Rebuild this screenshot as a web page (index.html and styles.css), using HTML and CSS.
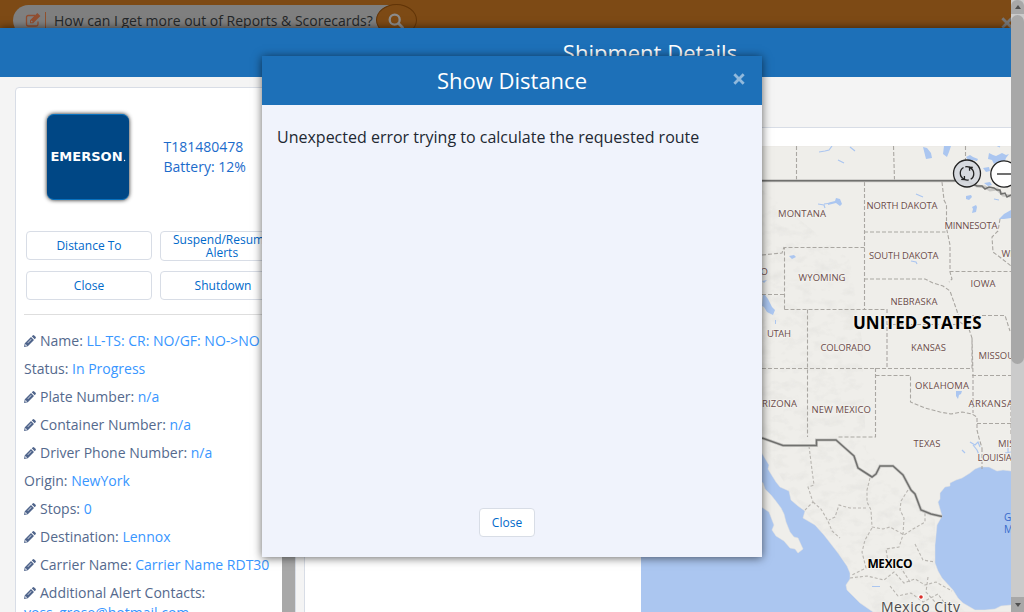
FILE: index.html
```html
<!DOCTYPE html>
<html lang="en">
<head>
<meta charset="utf-8">
<title>Shipment Details</title>
<link rel="stylesheet" href="styles.css">
</head>
<body>
<svg class="defs" width="0" height="0" aria-hidden="true">
  <symbol id="pencil" viewBox="0 0 12 12"><path fill="currentColor" fill-rule="evenodd" d="M0 12 .8 8.200 7 2 10 5 3.800 11.200ZM1.500 9 1.200 10.300 1.800 10.900 3 10.500ZM3.500 7.700 3.900 8.100 7.500 4.500 7.100 4.100ZM7.700 1.300 8.700.4Q9.500-.3 10.200.4L11.600 1.800Q12.300 2.600 11.600 3.300L10.700 4.300Z"/></symbol>
</svg>
<div class="window">
  <div class="page">
    <header class="topbar">
      <div class="search">
        <svg class="compose" viewBox="0 0 16 16"><path d="M13 9.500v2.700q0 1.800-1.800 1.800H3.300q-1.800 0-1.800-1.800V5.300q0-1.800 1.800-1.800H10" fill="none" stroke="currentColor" stroke-width="1.300"/><path d="M5 11.300V8.200L12.300 1l3.100 3.100L8.100 11.300ZM6 9v1.300h1.300l.5-.5L6.500 8.500Z" fill="currentColor" fill-rule="evenodd"/></svg>
        <span class="divider"></span>
        <span class="query">How can I get more out of Reports &amp; Scorecards?</span>
      </div>
      <div class="search-btn"><svg viewBox="0 0 16 16"><circle cx="6.700" cy="6.700" r="5" fill="none" stroke="currentColor" stroke-width="2.300"/><path d="m10.500 10.500 4 4" stroke="currentColor" stroke-width="2.800" stroke-linecap="round"/></svg></div>
      <svg class="cross dim" viewBox="0 0 12 12"><path d="m2 2 8 8M10 2l-8 8"/></svg>
    </header>
    <main class="sheet">
      <h1 class="sheet-title">Shipment Details</h1>
      <div class="content">
        <section class="panel">
          <div class="details">
            <div class="summary">
              <div class="logo"><svg viewBox="0 0 83 85"><text x="3.500" y="46.500" textLength="73" lengthAdjust="spacingAndGlyphs">EMERSON</text><circle cx="78.500" cy="46" r=".7"/></svg></div>
              <div class="unit"><div>T181480478</div><div>Battery: 12%</div></div>
            </div>
            <div class="actions">
              <button class="btn">Distance To</button><button class="btn two-line">Suspend/Resume Alerts</button>
              <button class="btn">Close</button><button class="btn">Shutdown</button>
            </div>
            <div class="fields">
              <p><svg class="pen"><use href="#pencil"/></svg>Name: <b>LL-TS: CR: NO/GF: NO-&gt;NO</b></p>
              <p>Status: <b>In Progress</b></p>
              <p><svg class="pen"><use href="#pencil"/></svg>Plate Number: <b>n/a</b></p>
              <p><svg class="pen"><use href="#pencil"/></svg>Container Number: <b>n/a</b></p>
              <p><svg class="pen"><use href="#pencil"/></svg>Driver Phone Number: <b>n/a</b></p>
              <p>Origin: <b>NewYork</b></p>
              <p><svg class="pen"><use href="#pencil"/></svg>Stops: <b>0</b></p>
              <p><svg class="pen"><use href="#pencil"/></svg>Destination: <b>Lennox</b></p>
              <p><svg class="pen"><use href="#pencil"/></svg>Carrier Name: <b>Carrier Name RDT30</b></p>
              <p class="last"><svg class="pen"><use href="#pencil"/></svg>Additional Alert Contacts:<br><b>voss_grose@hotmail.com</b></p>
            </div>
          </div>
          <div class="panel-scroll"></div>
        </section>
        <section class="map-panel">
          <svg class="map" viewBox="641 146 370 466">
            <defs><filter id="relief" x="0" y="0" width="100%" height="100%"><feTurbulence type="fractalNoise" baseFrequency=".07 .11" numOctaves="3" seed="8"/><feColorMatrix values="0 0 0 0 .5  0 0 0 0 .5  0 0 0 0 .48  1.6 0 0 0 -.75"/></filter>
            <clipPath id="mountains"><path d="M762 190 800 220 850 260 862 340 866 450 935 520 935 570 965 612H875L848 566 789 491 762 445Z"/></clipPath></defs>
            <rect class="water" x="641" y="146" width="370" height="466"/>
            <path class="land" d="M700 146H1011V471L1003 470 997 471 989 467 980 467 975 469 970 473 962 478 956 480 950 483 950 486 945 487 940 493 940 499 938 502 942 516 937 525 935 545 935 563 938 571 942 578 953 590 958 598 963 603 975 610 985 610 995 609 1001 606 1011 605V612H873L860 603 853 596 847 590 846 585 850 579 850 573 847 566 838 553 824 535 815 525 803 518 805 511 798 506 791 500 789 491 780 487 776 482 771 474 768 469 769 465 763 455 755 440H700Z"/>
            <path class="land" d="M755 477 763 483 765 489 771 495 775 500 781 508 784 514 786 522 790 532 794 537 798 538 803 549 798 553 795 549 790 548 784 541 776 536 772 530 774 525 769 512 760 506Z"/>
            <g clip-path="url(#mountains)"><rect x="762" y="190" width="210" height="422" filter="url(#relief)" opacity=".22"/></g>
            <g class="lakes">
              <path d="M923 147l4 1 4 5 1 5-6 1ZM944 146h7l-2 6-2 5-4-3ZM989 153l4 2 3 1 6-3 4 2 3-1-3 4-1 3-6 0-5 3-2-4-4-1ZM983 168l6-1 1 4-4 1ZM966 157l4-2 3 2 5 2-1 2-4-1-3 1-2-1ZM984 183l6-1 2 3-4 1ZM966 196l5-1 1 2-3 3-3-1ZM972 207l4-2 1 2-1 5-4 1 1-4ZM999 219l5-5 7-4v8l-7 1ZM831 202l4-1 1-3 4 1 2 5-2 2-4-3-8 2 0-2ZM789 256l5-1 2 2-4 2ZM763 295l2 0 3 4 4 8 3 3-2 5-6-3-3-5-2-1ZM956 391l6 0-1 3-2 1-1 4-2-3ZM872 586l8 0 0 1-8 0ZM762 281l5-1-3 3ZM775 320l1 0 0 4-1 0Z"/>
            </g>
            <path class="streams" d="m819 152 6-1 4-1 3-4M838 160l6 3M850 147l5 4M818 204l6 1 1 3M824 204l8-1M916 194l7 3M911 261l5 1 1 2M994 199l5 1M996 145l4 2M970 442l5 3 3-3 2 5M962 450l3 3M973 445l4 5 2 5M1008 447v5M1005 453l6-1"/>
            <g class="state-lines">
              <path d="M796.500 146V180M893.500 146 894.500 180M965.500 146V160M864.500 182V309M864 232H945.500M942 182 944 200 946.500 205V228L950 245V272L952 279 949 282M864 279H925L933 283 943 286 950 291 957 311 959 318M949.500 271.500H1011M784.500 309.500V247.500H864.500M762 255 782 253 784 247M762 294.500H784.500M784.500 309.500H887V368.500M807.500 309.500V437M762 368.500H972V338L969 329 960 322M887 324.500H960M952 315.500H1005L1010 331M875.500 368V437H837M875.500 375.500H910.500V402L925 408 940 412 951 414 962 412 972 414 977 417V430L979 438 982 448M972 338 973 375 973 413M972 375.500H1011M977 423.500H1011M1011 400V435M1000 219 998 231 992 237 993 252 1001 258 1011 266M982 448V469"/>
            </g>
            <path class="state-lines mexican" d="M809 446 812 470 814 485 808 487 813 502 805 510M813 502 821 509 828 521 832 531 840 538M870 478 867 490 867 502 871 510 872 527M866 508H850L839 505 835 517 829 520M872 527 883 529 890 527 899 532 904 535 913 529 925 522 925 513M908 490 901 501 900 510 904 518 903 535 899 547 886 549 888 562 901 568 910 582M915 544 923 560 935 562M872 528 865 540 862 552 866 568 852 575M850 578 867 576 884 580 894 572 904 583 915 579 925 585 936 582 952 591M890 586 898 596 911 593 923 602 938 594 948 608M928 577 926 592 936 603"/>
            <path class="border-glow" d="M762 180.700H966L977 186 985 187 990 190 997 189 1003 195 1011 196M762 438 783 445.500H816.500V440H836L845 448 854 456 858 468 872 477 876 474 880 466H893L903 475 911 490 915 494 921 510 931 514 942 516.500"/>
            <path class="border" d="M762 180.700H966L977 186 982 186 985 189 989 187 994 188 997 190 1000 190 1001 194 1005 193 1007 197 1011 195M762 438 783 445.500H816.500V440H836L845 448 854 456 858 468 872 477 876 474 880 466H893L903 475 911 490 915 494 921 510 931 514 942 516.500"/>
            <g class="states">
              <text x="778" y="217" textLength="48">MONTANA</text><text x="866.500" y="209" textLength="71">NORTH DAKOTA</text><text x="944.500" y="229" textLength="53">MINNESOTA</text><text x="869" y="259" textLength="69.500">SOUTH DAKOTA</text><text x="798.500" y="281" textLength="47">WYOMING</text><text x="1001.500" y="257">WISCONSIN</text><text x="970.500" y="287" textLength="25">IOWA</text><text x="890.500" y="305" textLength="47">NEBRASKA</text><text x="767" y="337" textLength="24">UTAH</text><text x="820.500" y="351" textLength="50.500">COLORADO</text><text x="911" y="351" textLength="35">KANSAS</text><text x="978.500" y="359" textLength="44">MISSOURI</text><text x="915" y="389" textLength="54">OKLAHOMA</text><text x="756" y="407" textLength="41">ARIZONA</text><text x="811.500" y="413" textLength="59.500">NEW MEXICO</text><text x="968.500" y="407" textLength="50">ARKANSAS</text><text x="913.500" y="447" textLength="27">TEXAS</text><text x="998" y="447">MISSISSIPPI</text><text x="977.500" y="461" textLength="47">LOUISIANA</text><text x="739" y="275" textLength="29">IDAHO</text>
            </g>
            <text class="country" x="853" y="329" textLength="128.500" font-size="17">UNITED STATES</text>
            <text class="country" x="867.500" y="568" textLength="45" font-size="12">MEXICO</text>
            <circle cx="921" cy="597" r="2.800" fill="#fff"/><circle cx="921" cy="597" r="1.800" fill="#d92f2b"/>
            <text class="city" x="881" y="612" textLength="79">Mexico City</text>
            <g class="gulf"><text x="1004" y="521">Gulf of</text><text x="1004" y="533">Mexico</text></g>
            <g class="controls"><circle cx="967" cy="173.500" r="13.500" fill="#d5d8de" fill-opacity=".93"/><path d="M964 179A6.500 6.500 0 0 1 963.500 167.500M965.300 166.800A6.500 6.500 0 0 1 969.500 167.200M970.200 167.900A6.500 6.500 0 0 1 970.700 179.200M968.700 179.800A6.500 6.500 0 0 1 965 179.700"/><path d="m961.200 179.300 3.300.2-.1-3.500M972.800 167.500l-3.300-.2.100 3.500"/><circle cx="1004" cy="174" r="13.200" fill="#fff"/><path d="M997 174H1011"/></g>
          </svg>
        </section>
      </div>
    </main>
  </div>
  <div class="scrollbar"><span class="arrow up"></span><span class="thumb"></span><span class="arrow down"></span></div>
  <div class="modal" role="dialog">
    <div class="modal-head"><h2>Show Distance</h2><svg class="cross" viewBox="0 0 12 12"><path d="m2 2 8 8M10 2l-8 8"/></svg></div>
    <div class="modal-body">Unexpected error trying to calculate the requested route</div>
    <div class="modal-foot"><button class="btn">Close</button></div>
  </div>
</div>
</body>
</html>
```
FILE: styles.css
```css
* { box-sizing: border-box; }
body { margin: 0; font-family: "Open Sans", sans-serif; font-size: 14px; color: #54698d; }
h1, h2, p { margin: 0; font-weight: 400; }
.defs { position: absolute; }
.window { position: relative; display: flex; width: 1024px; height: 612px; overflow: hidden; }
.page { width: 1011px; height: 612px; overflow: hidden; }
.topbar { display: flex; height: 28px; padding: 4px 0 0 13px; background: #7d4a15; overflow: hidden; }
.search { display: flex; align-items: center; width: 384px; height: 31px; margin-top: 1px; padding-left: 12px; border-radius: 16px 0 0 16px; background: #7f7f7f; flex: none; }
.compose { width: 16px; height: 16px; margin-bottom: 1px; color: #914e30; flex: none; }
.divider { width: 1px; height: 17px; margin: 0 8px 0 4px; background: #90512e; }
.query { color: #242729; font-size: 14px; white-space: nowrap; }
.search-btn { width: 41px; height: 32px; margin-left: -21px; padding: 8px 0 0 11px; border: 1px solid #613407; border-radius: 50%; background: #7d4a15; color: #8c8c8c; flex: none; }
.search-btn svg { display: block; width: 16px; height: 16px; }
.cross { width: 14px; height: 14px; fill: none; stroke: #91b9dc; stroke-width: 2.400; }
.cross.dim { margin: 12px -3px 0 auto; stroke: #777; flex: none; }
.sheet { position: relative; height: 584px; background: #f4f4f4; box-shadow: 0 0 8px rgba(0,0,0,.6); }
.sheet-title { height: 49px; padding-left: 289px; background: #1d70b8; color: #fff; text-align: center; font-size: 22px; line-height: 49px; }
.content { display: flex; gap: 8px; height: 535px; padding: 10px 0 0 15px; }
.panel { display: flex; width: 281px; height: 550px; border: 1px solid #d8dde6; border-radius: 4px; background: #fff; flex: none; }
.details { width: 266px; padding: 25px 0 0 8px; overflow: hidden; flex: none; }
.panel-scroll { width: 13px; background: #a8a8a8; }
.summary { display: flex; align-items: center; height: 88px; padding-left: 23px; gap: 34.500px; }
.logo { width: 82px; height: 86px; border-radius: 7px; border-top: 1px solid #0871bf; border-bottom: 1px solid #0871bf; background: #004785; box-shadow: 0 0 4px rgba(0,0,0,.9); flex: none; }
.logo svg { display: block; width: 82px; height: 84px; fill: #fff; }
.logo text { font: bold 12px "DejaVu Sans", sans-serif; }
.unit { color: #1c6bcb; line-height: 20px; white-space: nowrap; }
.actions { display: grid; grid-template-columns: 126px 126px; gap: 10px 8px; margin: 30px 0 0 2px; grid-template-rows: 30px 29px; align-items: start; }
.btn { height: 29px; padding: 0; border: 1px solid #d8dde6; border-radius: 4px; background: #fff; color: #0069ca; font: 12px/13px "Open Sans", sans-serif; }
.two-line { height: 30px; padding: 0 11px 0 9px; }
.fields { margin-top: 14px; padding-top: 16px; border-top: 1px solid #dedede; white-space: nowrap; }
.fields p { height: 28px; line-height: 20px; }
.fields b { font-weight: 400; color: #3896ff; }
.pen { display: inline-block; width: 12px; height: 12px; margin-right: 4px; vertical-align: -1px; color: #4f648b; }
.map-panel { display: flex; justify-content: flex-end; width: 710px; height: 490px; margin-top: 40px; padding-top: 18px; border: 1px solid #d8dde6; border-right: 0; background: #fff; flex: none; margin-right: -3px; }
.map { width: 370px; height: 466px; margin-right: 3px; flex: none; }
.water { fill: #abc6f0; }
.land { fill: #efeeea; stroke: #e4e3de; stroke-width: .5; }
.lakes { fill: #abc6f0; }
.streams { fill: none; stroke: #abc6f0; stroke-width: 1.200; }
.state-lines { fill: none; stroke: #aaa7a2; stroke-width: 1.100; stroke-dasharray: 4 2; }
.mexican { stroke: #b9b6b1; stroke-dasharray: 3 2; }
.border-glow { fill: none; stroke: #c9c8c5; stroke-width: 3; }
.border { fill: none; stroke: #70706e; stroke-width: 1.500; }
.states text { fill: #6b4c4a; font-size: 9.500px; paint-order: stroke; stroke: #f3f2ee; stroke-width: 1.500; }
.country { fill: #000; font-weight: 700; paint-order: stroke; stroke: #f4f3ef; stroke-width: 2; }
.city { fill: #4a4a4a; font-size: 14px; paint-order: stroke; stroke: #f4f3ef; stroke-width: 2; }
.gulf { fill: #3568c9; font-size: 10px; }
.controls { fill: none; stroke: #222; stroke-width: 1.300; }
.scrollbar { display: flex; flex-direction: column; width: 13px; height: 612px; background: #cbcbcb; z-index: 1; }
.arrow { display: flex; align-items: center; justify-content: center; height: 15px; background: #a8a8a8; }
.arrow::before { content: ""; border: 3px solid transparent; border-top: 0; border-bottom: 4px solid #505050; }
.up { border-radius: 6px 6px 0 0; height: 14px; }
.down { margin-top: auto; }
.down::before { transform: rotate(180deg); }
.thumb { height: 349px; margin-top: 1px; border-radius: 7px; background: #a8a8a8; }
.modal { position: absolute; top: 56px; left: 262px; display: flex; flex-direction: column; width: 500px; height: 501px; background: #f0f3fc; box-shadow: 0 1px 9px rgba(0,0,0,.6); z-index: 2; }
.modal-head { display: flex; align-items: center; height: 49px; padding: 0 16px 0 30px; background: #1d70b8; color: #fff; }
.modal-head h2 { flex: 1; text-align: center; font-size: 22px; line-height: 49px; }
.modal-head .cross { margin-bottom: 3px; }
.modal-body { flex: 1; padding: 20px 15px; color: #222832; font-size: 16px; line-height: 24px; }
.modal-foot { height: 49px; text-align: center; padding-right: 10px; }
.modal-foot .btn { width: 56px; }
```
